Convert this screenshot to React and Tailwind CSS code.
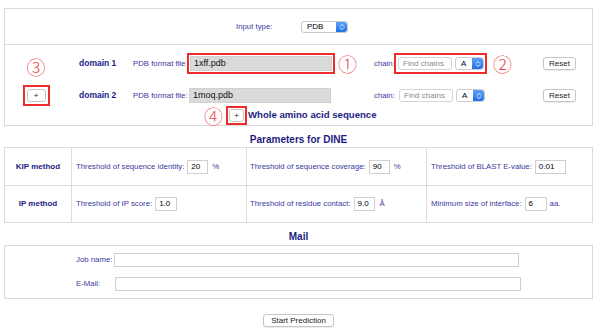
import React from "react";

function Chev() {
  return (
    <svg width="6" height="8" viewBox="0 0 6 8">
      <path d="M1.2 3.2 L3 1.4 L4.8 3.2 M1.2 4.8 L3 6.6 L4.8 4.8" stroke="white" strokeWidth="0.9" fill="none" strokeLinecap="round" />
    </svg>
  );
}

function Sel({ label, cls }) {
  return (
    <div className={cls}>
      <div className="flex flex-1 items-center pl-[5px] text-[8px] leading-none text-black">{label}</div>
      <div className="flex w-[11px] items-center justify-center rounded-r-[3px] bg-gradient-to-b from-[#5aa1f8] to-[#1f6fe9]">
        <Chev />
      </div>
    </div>
  );
}

function Btn({ children, cls }) {
  return <div className={cls}>{children}</div>;
}

const circ = "text-[19px] leading-none font-light text-[#f24a4a] [font-family:'Noto_Sans_CJK_JP',sans-serif]";

export default function App() {
  return (
    <div className="h-[333px] w-[600px] overflow-hidden whitespace-nowrap bg-white text-[#3535a0] [font-family:'Liberation_Sans',Arial,sans-serif]">
      {/* top box */}
      <div className="ml-[4px] mt-[8px] w-[589px] border border-[#d9d9d9]">
        <div className="flex h-[36px] items-center border-b border-[#dcdcdc] pl-[231px] pt-[1px]">
          <div className="w-[65px] text-[7.8px] text-[#3a3aa0]">Input type:</div>
          <Sel label="PDB" cls="flex h-[12px] w-[47px] items-stretch rounded-[3px] border border-[#c8c8c8] bg-white" />
        </div>
        <div className="flex h-[80px] flex-col pt-[8px]">
          {/* row 1 */}
          <div className="flex h-[21px] items-center">
            <div className="flex w-[62px] justify-center pt-[6px]">
              <span className={circ}>③</span>
            </div>
            <div className="ml-[12px] w-[54px] text-[8.5px] font-bold text-[#1c1c82]">domain 1</div>
            <div className="w-[54px] text-[7.8px] text-[#3a3aa0]">PDB format file</div>
            <div className="flex h-[21px] w-[148px] items-center border-2 border-[#ee2c2c] bg-white px-[1px]">
              <div className="flex h-[15px] w-full items-center border border-[#d0d0d0] bg-[#dadada] pl-[3px] text-[9px] text-[#111]">1xff.pdb</div>
            </div>
            <div className="flex w-[39px] pl-[3px]">
              <span className={circ}>①</span>
            </div>
            <div className="w-[20px] text-[7.8px] text-[#3a3aa0]">chain:</div>
            <div className="flex h-[21px] w-[93px] items-center border-2 border-[#ee2c2c] bg-white pl-[2px]">
              <div className="flex h-[13px] w-[54px] items-center rounded-[3px] border border-[#d4d4d4] bg-white pl-[4px] text-[8px] text-[#8a8a8a]">Find chains</div>
              <Sel label="A" cls="ml-[3px] flex h-[13px] w-[29px] items-stretch rounded-[3px] border border-[#cfcfcf] bg-white" />
            </div>
            <div className="flex w-[56px] pl-[6px]">
              <span className={circ}>②</span>
            </div>
            <Btn cls="flex h-[13px] w-[33px] items-center justify-center rounded-[3px] border border-[#c6c6c6] bg-white text-[8px] text-[#222] shadow-[0_1px_1px_rgba(0,0,0,0.08)]">Reset</Btn>
          </div>
          {/* row 2 */}
          <div className="mt-[11px] flex h-[21px] items-center">
            <div className="flex w-[62px] justify-center">
              <div className="flex h-[21px] w-[27px] items-center justify-center border-2 border-[#ee2c2c]">
                <Btn cls="flex h-[13px] w-[19px] items-center justify-center rounded-[3px] border border-[#c6c6c6] bg-white text-[8px] leading-none text-[#222]">+</Btn>
              </div>
            </div>
            <div className="ml-[12px] w-[54px] text-[8.5px] font-bold text-[#1c1c82]">domain 2</div>
            <div className="w-[54px] text-[7.8px] text-[#3a3aa0]">PDB format file:</div>
            <div className="flex h-[21px] w-[148px] items-center border-2 border-transparent">
              <div className="flex h-[15px] w-[142px] items-center border border-[#d0d0d0] bg-[#dadada] pl-[3px] text-[9px] text-[#111]">1moq.pdb</div>
            </div>
            <div className="w-[39px]" />
            <div className="w-[20px] text-[7.8px] text-[#3a3aa0]">chain:</div>
            <div className="flex h-[21px] w-[93px] items-center border-2 border-transparent pl-[3px]">
              <div className="flex h-[13px] w-[54px] items-center rounded-[3px] border border-[#d4d4d4] bg-white pl-[4px] text-[8px] text-[#8a8a8a]">Find chains</div>
              <Sel label="A" cls="ml-[3px] flex h-[13px] w-[29px] items-stretch rounded-[3px] border border-[#cfcfcf] bg-white" />
            </div>
            <div className="w-[56px]" />
            <Btn cls="flex h-[13px] w-[33px] items-center justify-center rounded-[3px] border border-[#c6c6c6] bg-white text-[8px] text-[#222] shadow-[0_1px_1px_rgba(0,0,0,0.08)]">Reset</Btn>
          </div>
          {/* row 3 */}
          <div className="flex h-[19px] items-center pl-[199px]">
            <span className={circ}>④</span>
            <div className="ml-[3px] flex h-[19px] w-[21px] items-center justify-center border-2 border-[#ee2c2c]">
              <Btn cls="flex h-[13px] w-[15px] items-center justify-center rounded-[3px] border border-[#c6c6c6] bg-white text-[8px] leading-none text-[#222]">+</Btn>
            </div>
            <div className="ml-[1px] text-[9.6px] font-bold text-[#1c1c82]">Whole amino acid sequence</div>
          </div>
        </div>
      </div>

      {/* Parameters title */}
      <div className="flex h-[21px] w-[597px] items-end justify-center pb-[2px]">
        <div className="text-[10px] font-bold leading-[10px] text-[#1c1c82]">Parameters for DINE</div>
      </div>

      {/* table */}
      <div className="ml-[4px] grid w-[589px] grid-cols-[67px_175px_180px_166px] border-l border-t border-[#dcdcdc]">
        <div className="flex h-[38px] items-center justify-center border-b border-r border-[#dcdcdc] text-[8px] font-bold text-[#1c1c82]">KIP method</div>
        <div className="flex h-[38px] items-center border-b border-r border-[#dcdcdc] pl-[4px] text-[7.8px] text-[#3a3aa0]">
          <span>Threshold of sequence identity:</span>
          <div className="ml-[3px] flex h-[14px] w-[21px] items-center border border-[#cfcfcf] bg-white pl-[3px] text-[8px] text-black">20</div>
          <span className="ml-[4px]">%</span>
        </div>
        <div className="flex h-[38px] items-center border-b border-r border-[#dcdcdc] pl-[3px] text-[7.8px] text-[#3a3aa0]">
          <span>Threshold of sequence coverage:</span>
          <div className="ml-[3px] flex h-[14px] w-[21px] items-center border border-[#cfcfcf] bg-white pl-[3px] text-[8px] text-black">90</div>
          <span className="ml-[4px]">%</span>
        </div>
        <div className="flex h-[38px] items-center border-b border-r border-[#dcdcdc] pl-[4px] text-[7.8px] text-[#3a3aa0]">
          <span>Threshold of BLAST E-value:</span>
          <div className="ml-[3px] flex h-[14px] w-[31px] items-center border border-[#cfcfcf] bg-white pl-[3px] text-[8px] text-black">0.01</div>
        </div>

        <div className="flex h-[37px] items-center justify-center border-b border-r border-[#dcdcdc] text-[8px] font-bold text-[#1c1c82]">IP method</div>
        <div className="flex h-[37px] items-center border-b border-r border-[#dcdcdc] pl-[4px] text-[7.8px] text-[#3a3aa0]">
          <span>Threshold of IP score:</span>
          <div className="ml-[3px] flex h-[14px] w-[22px] items-center border border-[#cfcfcf] bg-white pl-[3px] text-[8px] text-black">1.0</div>
        </div>
        <div className="flex h-[37px] items-center border-b border-r border-[#dcdcdc] pl-[3px] text-[7.8px] text-[#3a3aa0]">
          <span>Threshold of residue contact:</span>
          <div className="ml-[3px] flex h-[14px] w-[21px] items-center border border-[#cfcfcf] bg-white pl-[3px] text-[8px] text-black">9.0</div>
          <span className="ml-[5px]">Å</span>
        </div>
        <div className="flex h-[37px] items-center border-b border-r border-[#dcdcdc] pl-[4px] text-[7.8px] text-[#3a3aa0]">
          <span>Minimum size of interface:</span>
          <div className="ml-[3px] flex h-[14px] w-[22px] items-center border border-[#cfcfcf] bg-white pl-[3px] text-[8px] text-black">6</div>
          <span className="ml-[3px]">aa.</span>
        </div>
      </div>

      {/* Mail title */}
      <div className="flex h-[22px] w-[597px] items-end justify-center pb-[3px]">
        <div className="text-[10px] font-bold leading-[10px] text-[#1c1c82]">Mail</div>
      </div>

      {/* Mail box */}
      <div className="ml-[4px] flex w-[589px] flex-col gap-[10px] border border-[#d9d9d9] pb-[7px] pl-[71px] pt-[7px]">
        <div className="flex h-[14px] items-center">
          <div className="w-[38px] text-[7.8px] text-[#3a3aa0]">Job name:</div>
          <div className="h-[14px] w-[405px] border border-[#cfcfcf] bg-white" />
        </div>
        <div className="flex h-[14px] items-center">
          <div className="w-[39px] text-[7.8px] text-[#3a3aa0]">E-Mail:</div>
          <div className="h-[14px] w-[406px] border border-[#cfcfcf] bg-white" />
        </div>
      </div>

      {/* Start */}
      <div className="ml-[4px] mt-[15px] flex w-[589px] justify-center">
        <Btn cls="flex h-[13px] w-[71px] items-center justify-center rounded-[3px] border border-[#c6c6c6] bg-white text-[8px] text-[#222] shadow-[0_1px_1px_rgba(0,0,0,0.08)]">Start Prediction</Btn>
      </div>
    </div>
  );
}
